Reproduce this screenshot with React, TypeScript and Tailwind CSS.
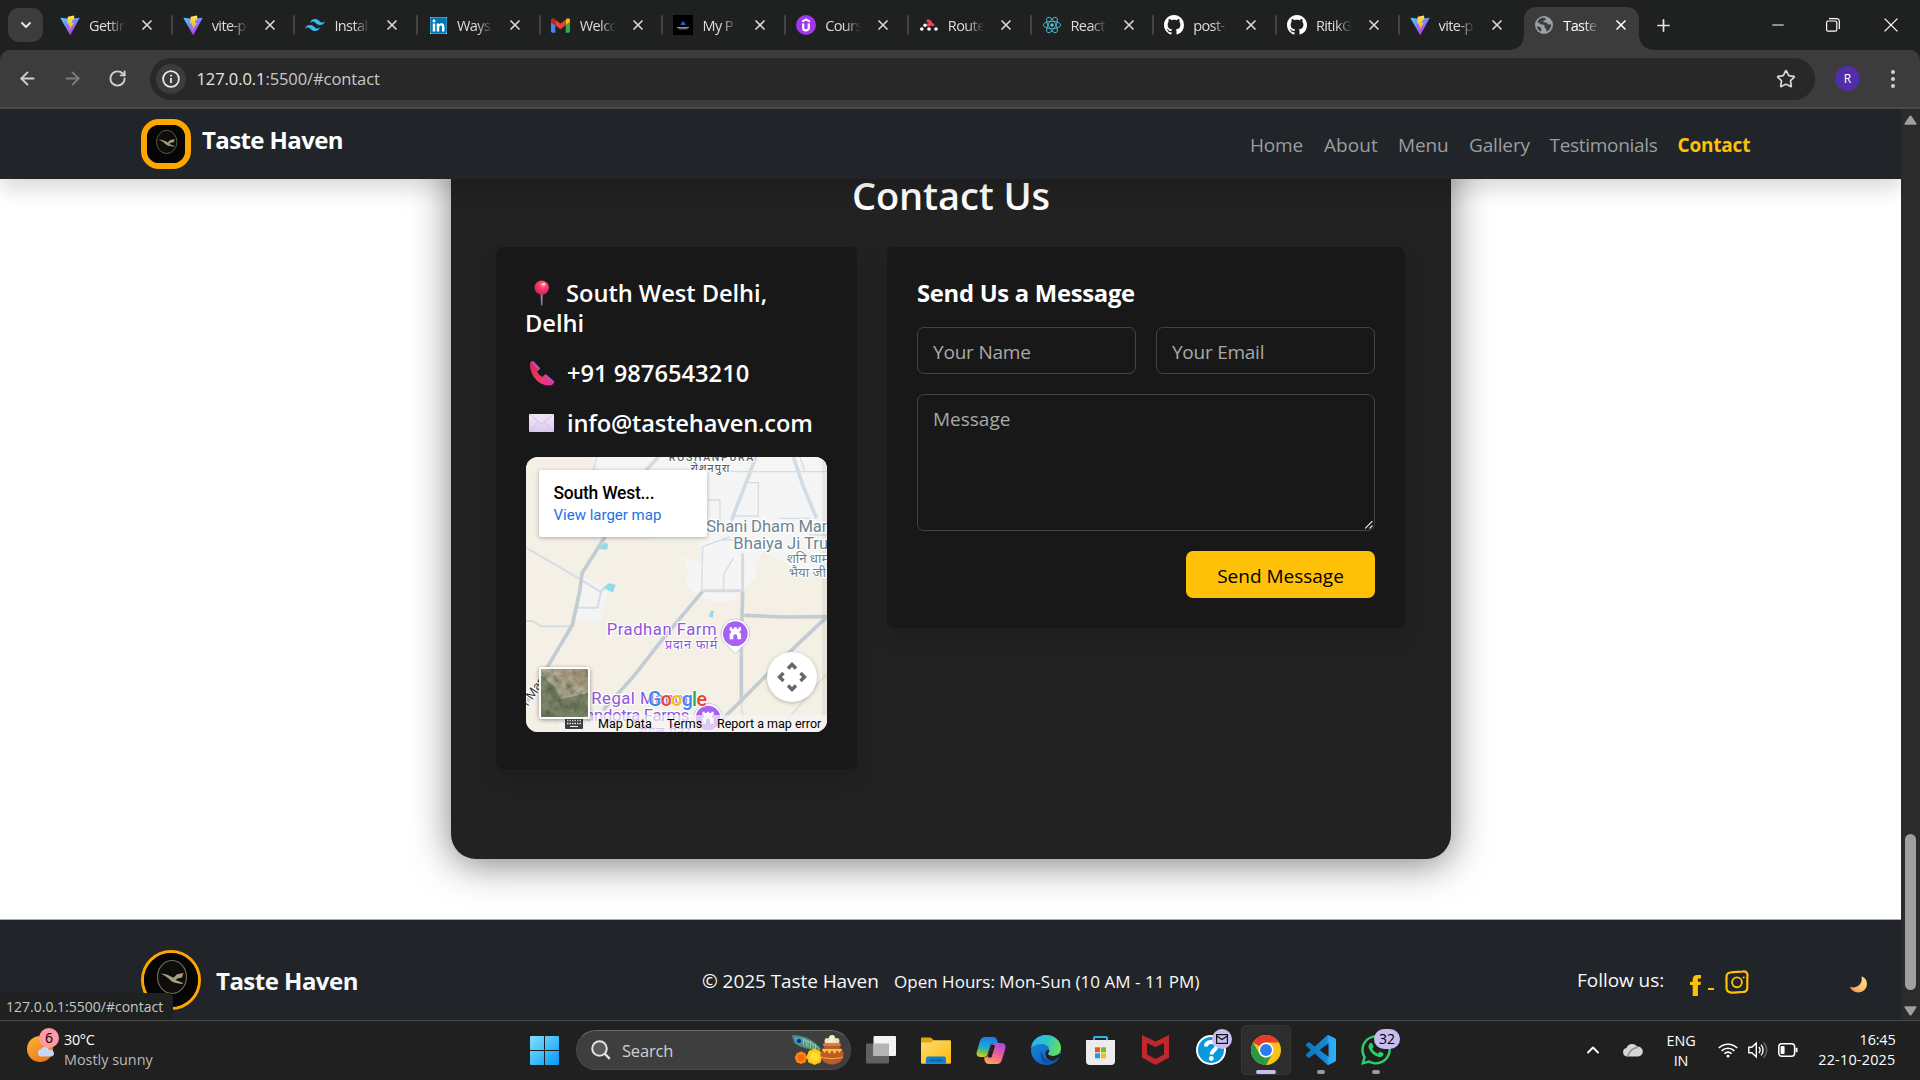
import type { ReactNode } from "react";
import { ArrowLeft, ArrowRight, ChevronDown, ChevronUp, Minus, Plus, RotateCw, Star, X } from "lucide-react";
import { FaLinkedin, FaWhatsapp } from "react-icons/fa";

/* ---------- favicons ---------- */

function ViteIcon() {
  return (
    <svg width="20" height="20" viewBox="0 0 32 32">
      <defs>
        <linearGradient id="vite-a" x1="0" y1="0" x2="0.6" y2="1">
          <stop offset="0" stopColor="#41d1ff" />
          <stop offset="1" stopColor="#bd34fe" />
        </linearGradient>
        <linearGradient id="vite-b" x1="0" y1="0" x2="0" y2="1">
          <stop offset="0" stopColor="#ffea83" />
          <stop offset="0.2" stopColor="#ffdd35" />
          <stop offset="1" stopColor="#ffa800" />
        </linearGradient>
      </defs>
      <path d="M31 5.5 17 31q-.7 1-1.4 0L1 5.500q-.5-1.300.8-1.200L16 6.500 30.200 4.300Q31.500 4.200 31 5.500Z" fill="url(#vite-a)" />
      <path d="M22.500.6 12.300 2.600l-.8 11.200 3.200-.6-.8 4.600 2.500-.6-1.300 7.600 7-12.600-3.500.6 1.500-5.300 3-.7Z" fill="url(#vite-b)" />
    </svg>
  );
}

function TailwindIcon() {
  return (
    <svg width="20" height="20" viewBox="2 2 20 20" fill="#38bdf8">
      <path d="M12 6c-2.67 0-4.33 1.33-5 4 1-1.33 2.17-1.83 3.5-1.5.76.19 1.31.74 1.91 1.35.98 1 2.12 2.15 4.59 2.15 2.67 0 4.33-1.33 5-4-1 1.33-2.17 1.83-3.5 1.5-.76-.19-1.3-.74-1.91-1.35C15.61 7.15 14.47 6 12 6zM7 12c-2.67 0-4.33 1.33-5 4 1-1.33 2.17-1.83 3.500-1.500.76.19 1.300.74 1.910 1.350.98 1 2.120 2.150 4.590 2.150 2.670 0 4.330-1.330 5-4-1 1.330-2.170 1.830-3.500 1.500-.76-.19-1.300-.74-1.910-1.350C10.610 13.150 9.470 12 7 12z" />
    </svg>
  );
}

function LinkedInIcon() {
  return (
    <div className="h-[17px] w-[17px] bg-white">
      <FaLinkedin className="-ml-px -mt-px h-[19px] w-[19px] text-[#0077b5]" />
    </div>
  );
}

function GmailIcon() {
  return (
    <svg width="19" height="15" viewBox="52 42 88 66">
      <path fill="#4285f4" d="M58 108h14V74L52 59v43c0 3.320 2.690 6 6 6" />
      <path fill="#34a853" d="M120 108h14c3.320 0 6-2.690 6-6V59l-20 15" />
      <path fill="#fbbc04" d="M120 48v26l20-15v-8c0-7.420-8.470-11.650-14.400-7.200" />
      <path fill="#ea4335" d="M72 74V48l24 18 24-18v26L96 92" />
      <path fill="#c5221f" d="M52 51v8l20 15V48l-5.600-4.200c-5.940-4.450-14.400-.22-14.400 7.200" />
    </svg>
  );
}

function PortfolioIcon() {
  return (
    <svg width="20" height="20" viewBox="0 0 20 20">
      <rect width="20" height="20" fill="#000" />
      <path d="M10 6c1.500 1.700 2.500 3 2.500 4H7.500c0-1 1-2.300 2.500-4Z" fill="#2f5be0" />
      <path d="M4 12.500h12M5.500 13.800h9" stroke="#b9b9c9" strokeWidth="0.8" />
    </svg>
  );
}

function UdemyIcon() {
  return (
    <svg width="20" height="20" viewBox="0 0 20 20">
      <circle cx="10" cy="10" r="10" fill="#a435f0" />
      <path d="M6.200 6.600 10 4.400l3.800 2.200" fill="none" stroke="#fff" strokeWidth="1.800" />
      <path d="M7.200 8.500v4.200c0 3.600 5.600 3.600 5.600 0V8.500" fill="none" stroke="#fff" strokeWidth="2.300" />
    </svg>
  );
}

function RouterIcon() {
  return (
    <svg width="20" height="20" viewBox="0 0 20 20">
      <path d="M8.800 6c4 0 3 4 0.200 4M9.500 6c2.500.3 2 3.800 4.500 3.800" fill="none" stroke="#f44250" strokeWidth="2.800" strokeLinecap="round" />
      <circle cx="6" cy="10.200" r="1.700" fill="#fff" />
      <circle cx="2.800" cy="14" r="1.800" fill="#fff" />
      <circle cx="10" cy="14" r="1.800" fill="#fff" />
      <circle cx="17" cy="14" r="1.800" fill="#fff" />
    </svg>
  );
}

function ReactIcon() {
  return (
    <svg width="20" height="20" viewBox="-11.500 -11.500 23 23" fill="none" stroke="#4fc1dc">
      <circle r="2" fill="#58c4dc" stroke="none" />
      <ellipse rx="10" ry="4.200" />
      <ellipse rx="10" ry="4.200" transform="rotate(60)" />
      <ellipse rx="10" ry="4.200" transform="rotate(120)" />
    </svg>
  );
}

function GithubIcon() {
  return (
    <svg width="20" height="20" viewBox="0 0 16 16" fill="#fff">
      <path d="M8 0C3.58 0 0 3.58 0 8c0 3.54 2.29 6.53 5.47 7.59.4.07.55-.17.55-.38 0-.19-.01-.82-.01-1.49-2.01.37-2.53-.49-2.69-.94-.09-.23-.48-.94-.82-1.13-.28-.15-.68-.52-.01-.53.63-.01 1.08.58 1.23.82.72 1.21 1.87.87 2.33.66.07-.52.28-.87.51-1.07-1.78-.2-3.64-.89-3.64-3.95 0-.87.31-1.59.82-2.15-.08-.2-.36-1.02.08-2.12 0 0 .67-.21 2.2.82.64-.18 1.32-.27 2-.27.68 0 1.36.09 2 .27 1.53-1.04 2.2-.82 2.2-.82.44 1.1.16 1.92.08 2.12.51.56.82 1.27.82 2.15 0 3.07-1.87 3.75-3.65 3.95.29.25.54.73.54 1.48 0 1.07-.01 1.93-.01 2.2 0 .21.15.46.55.38A8.013 8.013 0 0016 8c0-4.42-3.58-8-8-8z" />
    </svg>
  );
}

function GlobeIcon() {
  return (
    <svg width="18" height="18" viewBox="0 0 18 18">
      <circle cx="9" cy="9" r="9" fill="#9aa0a6" />
      <path d="M8 1.800c1.500 0 3.300.5 2.600 1.900-.5 1-2 .6-2.400 1.700-.3 1 1.600.9 2.900 1.100 1.600.3 1.300 2 2.600 2.100.9.100 1.500-.5 2.300-.3.600 3-1.500 6-4.200 7.200-.9-.6-.2-1.600-.6-2.500-.4-.8-1.600-.6-1.700-1.700-.1-1 .6-1.500-.2-2.200C8.300 8.200 5.500 9 4.700 7.500 4.200 6.300 3 6.300 2.200 6.500 3.200 3.600 5.500 1.900 8 1.800Z" fill="#3c3c3c" />
      <path d="M2 10.300c1.500.4 3.800.7 4.200 2.100.3 1-.3 2.200-.2 3.200C3.700 14.700 2 12.700 2 10.300Z" fill="#3c3c3c" />
    </svg>
  );
}

const tabs: { icon: ReactNode; title: string }[] = [
  { icon: <ViteIcon />, title: "Getting" },
  { icon: <ViteIcon />, title: "vite-p" },
  { icon: <TailwindIcon />, title: "Instal" },
  { icon: <LinkedInIcon />, title: "Ways" },
  { icon: <GmailIcon />, title: "Welco" },
  { icon: <PortfolioIcon />, title: "My P" },
  { icon: <UdemyIcon />, title: "Cours" },
  { icon: <RouterIcon />, title: "Route" },
  { icon: <ReactIcon />, title: "React" },
  { icon: <GithubIcon />, title: "post-" },
  { icon: <GithubIcon />, title: "RitikG" },
  { icon: <ViteIcon />, title: "vite-p" },
];

function TabBody({ icon, title, active }: { icon: ReactNode; title: string; active?: boolean }) {
  return (
    <>
      <div className="flex h-5 w-5 shrink-0 items-center justify-center">{icon}</div>
      <div
        className={
          "ml-[9px] mt-[2px] w-[36px] overflow-hidden whitespace-nowrap text-[14.500px] leading-[22px] tracking-[-0.600px] [mask-image:linear-gradient(to_right,#000_55%,transparent)] " +
          (active ? "text-white" : "text-[#dcdcdc]")
        }
      >
        {title}
      </div>
      <X className={"ml-[14px] h-4 w-4 shrink-0 " + (active ? "text-white" : "text-[#dadada]")} strokeWidth={2.500} />
    </>
  );
}

function TabStrip() {
  return (
    <div className="flex h-[50px] items-center bg-[#1f2120]">
      <div className="ml-2 flex h-[34px] w-[35px] items-center justify-center rounded-[11px] bg-[#3c3c3c]">
        <ChevronDown className="h-4 w-4 text-[#e3e3e3]" strokeWidth={3} />
      </div>
      <div className="ml-[5px] flex">
        {tabs.map((t, i) => (
          <div key={i} className="relative flex h-[34px] w-[122.7px] items-center pl-3">
            <TabBody icon={t.icon} title={t.title} />
            {i < 11 && <div className="absolute -right-[2px] top-[7px] h-5 w-[2px] rounded bg-[#434443]" />}
          </div>
        ))}
      </div>
      <div className="relative ml-[4px] mt-[7px] flex h-[43px] w-[115px] items-center rounded-t-[12px] bg-[#3c3c3c] pb-[7px] pl-[10px]">
        <div className="absolute -left-[14px] bottom-0 h-[14px] w-[14px] bg-[radial-gradient(circle_at_0_0,transparent_13.500px,#3c3c3c_14px)]" />
        <div className="absolute -right-[14px] bottom-0 h-[14px] w-[14px] bg-[radial-gradient(circle_at_100%_0,transparent_13.500px,#3c3c3c_14px)]" />
        <TabBody icon={<GlobeIcon />} title="Taste" active />
      </div>
      <Plus className="ml-[15px] h-[19px] w-[19px] text-[#e3e3e3]" strokeWidth={2.200} />
      <Minus className="ml-[96px] h-[18px] w-[18px] text-white" strokeWidth={1.500} />
      <svg className="ml-[39px]" width="14" height="14" viewBox="0 0 14 14" fill="none" stroke="#fff" strokeWidth="1.200">
        <rect x="0.600" y="3" width="10.200" height="10.200" rx="1.500" />
        <path d="M3 .7h7.800a2.500 2.500 0 0 1 2.500 2.500V11" />
      </svg>
      <svg className="ml-[44px]" width="14" height="14" viewBox="0 0 14 14" stroke="#fff" strokeWidth="1.300">
        <path d="M.6.6l12.800 12.800M13.400.6.6 13.400" />
      </svg>
    </div>
  );
}

function Toolbar() {
  return (
    <div className="bg-[#1f2120]">
      <div className="flex h-[59px] items-center rounded-t-[10px] border-b-2 border-[#494949] bg-[#3c3c3c]">
        <ArrowLeft className="ml-[17px] h-[21px] w-[21px] text-[#d0d0d0]" strokeWidth={2.100} />
        <ArrowRight className="ml-[24px] h-[21px] w-[21px] text-[#7d7d7d]" strokeWidth={2.100} />
        <RotateCw className="ml-[25px] h-[19px] w-[19px] text-[#d0d0d0]" strokeWidth={2.400} />
        <div className="ml-[23px] flex h-[42px] w-[1665px] items-center rounded-full bg-[#282828] pl-[6px] pr-[19px]">
          <div className="flex h-[30px] w-[30px] items-center justify-center rounded-full bg-[#3c3c3c]">
            <svg width="18" height="18" viewBox="0 0 18 18" fill="none" stroke="#e8e8e8" strokeWidth="1.800">
              <circle cx="9" cy="9" r="7.900" />
              <path d="M9 8v5M9 4.700v1.900" />
            </svg>
          </div>
          <div className="ml-[10.500px] mt-px text-[16.500px] leading-6 tracking-[-0.080px] text-[#e6e6e6]">
            127.0.0.1<span className="text-[#c7c7c7]">:5500/#contact</span>
          </div>
          <Star className="ml-auto h-[20px] w-[20px] text-[#d6d6d6]" strokeWidth={2.100} />
        </div>
        <div className="ml-[20px] flex h-[25px] w-[25px] items-center justify-center rounded-full bg-[#512da8] text-[12px] text-white">R</div>
        <div className="ml-[31px] flex flex-col gap-[3px]">
          <div className="h-1 w-1 rounded-full bg-[#d0d0d0]" />
          <div className="h-1 w-1 rounded-full bg-[#d0d0d0]" />
          <div className="h-1 w-1 rounded-full bg-[#d0d0d0]" />
        </div>
      </div>
    </div>
  );
}

/* ---------- site ---------- */

function CraneLogo({ className }: { className: string }) {
  return (
    <svg className={className} viewBox="0 0 54 54">
      <rect width="54" height="54" fill="#050505" />
      <ellipse cx="28" cy="24" rx="14.500" ry="16.500" fill="#0d0d0b" stroke="#6d6653" strokeWidth="1.200" />
      <path d="M16.500 20.500c5 .4 9 1.800 13 4.300l3.500-3.600 6.500-1.100-1.500 4.500-4.500.8-2 1.500 7.500 3-.5 1c-5-.5-8.500-1-11-2.700-2.500-2.500-6-5.700-11-7.700Z" fill="#a89f83" />
    </svg>
  );
}

const navLinks = [
  { label: "Home", cls: "w-[54px] tracking-[-0.200px]" },
  { label: "About", cls: "w-[54px] tracking-[0.100px]" },
  { label: "Menu", cls: "w-[51px] tracking-[-0.150px]" },
  { label: "Gallery", cls: "w-[60.500px] tracking-[-0.150px]" },
  { label: "Testimonials", cls: "w-[108px] tracking-[-0.300px]" },
];

function Navbar() {
  return (
    <div className="relative z-10 flex h-[70px] items-start bg-[#212529] pl-[141px] shadow-[0_10px_20px_rgba(0,0,0,0.150)]">
      <div className="mt-[10px] h-[50px] w-[50px] overflow-hidden rounded-[18px] border-[6px] border-[#ffa500]">
        <CraneLogo className="h-full w-full" />
      </div>
      <div className="ml-[11px] mt-[16px] w-[151px] text-[24px] font-bold leading-[30px] tracking-[-0.600px] text-white">Taste Haven</div>
      <div className="ml-[897px] mt-[21px] flex gap-5 whitespace-nowrap text-[19px] leading-[30px] text-[#9b9d9f]">
        {navLinks.map((l) => (
          <div key={l.label} className={l.cls}>{l.label}</div>
        ))}
        <div className="font-bold tracking-[-0.200px] text-[#ffc107]">Contact</div>
      </div>
    </div>
  );
}

function PinIcon() {
  return (
    <svg width="30" height="26" viewBox="0 0 30 26">
      <defs>
        <radialGradient id="pin" cx="0.600" cy="0.300" r="0.700">
          <stop offset="0" stopColor="#ff7d94" />
          <stop offset="0.450" stopColor="#fb3a68" />
          <stop offset="1" stopColor="#d51f5c" />
        </radialGradient>
      </defs>
      <path d="M15.500 14h2.400l-.5 11.500h-1.400Z" fill="#8d7f97" />
      <circle cx="16.700" cy="7.600" r="7.200" fill="url(#pin)" />
      <ellipse cx="18.600" cy="4.200" rx="1.700" ry="1.300" fill="#ffd3da" />
    </svg>
  );
}

function PhoneIcon() {
  return (
    <svg width="30" height="26" viewBox="0 0 30 26">
      <defs>
        <linearGradient id="phone" x1="0" y1="0" x2="1" y2="1">
          <stop offset="0" stopColor="#d12a4c" />
          <stop offset="0.600" stopColor="#f0386b" />
          <stop offset="1" stopColor="#e32bb0" />
        </linearGradient>
      </defs>
      <path d="M5 3.500C5 1.500 7 .3 8.300 1.200l6.300 6.600c.7 1-.2 1.800-1 2.400l-1.400 1.200c1 2.400 2.800 4.300 5.300 5.600l1.400-1.600c.7-.9 1.800-1.300 2.700-.5l7.300 6.300c1 1-.4 3-2 3.700C16 28 4.500 17 5 3.500Z" fill="url(#phone)" />
      <path d="M8.300 1.200l6.300 6.600c.7 1-.2 1.800-1 2.400L6.800 2.500c.2-1 .9-1.500 1.500-1.300ZM21.600 14.900l7.300 6.300-1.900 1.600-7.400-7c.6-.9 1.300-1.300 2-.9Z" fill="#b153c4" />
    </svg>
  );
}

function MailIcon() {
  return (
    <svg width="30" height="26" viewBox="0 0 30 26">
      <defs>
        <linearGradient id="mail" x1="0" y1="0" x2="0" y2="1">
          <stop offset="0" stopColor="#f4ecf8" />
          <stop offset="1" stopColor="#d9c6f0" />
        </linearGradient>
      </defs>
      <rect x="4" y="4" width="25" height="18" rx="1" fill="url(#mail)" />
      <path d="M4.500 21.500 13.500 12M28.500 21.500 19.500 12" stroke="#cdbbe6" strokeWidth="0.800" />
      <path d="M4.500 4.500 16.500 14 28.500 4.500" fill="#ece2f4" stroke="#cdbbe6" strokeWidth="0.900" />
    </svg>
  );
}

function MapMarker({ x, y }: { x: number; y: number }) {
  return (
    <g transform={`translate(${x} ${y})`}>
      <path d="M0-44a44 44 0 0 1 30 75C18 42 12 46 6 55q-6 8-12 0C-12 46-18 42-30 31A44 44 0 0 1 0-44Z" fill="#fff" stroke="#b9b4c0" strokeWidth="2" />
      <circle r="37" fill="#a860f5" />
      <path d="M-17 17V-1h4V-9h-4v-10h7v4h6v-4h8v4h6v-4h7v10h-4v8h4v18H6V8a6 6 0 0 0-12 0v9Z" fill="#fff" />
    </g>
  );
}

function MapView() {
  return (
    <div className="relative mt-[19px] h-[275px] w-[301px] overflow-hidden rounded-[12px] bg-[#f5f0e5] font-['Roboto'] font-normal">
      <svg className="block h-[275px] w-[301px]" viewBox="78 51 903 825" fill="none" fontFamily="Roboto, 'Noto Sans', sans-serif">
        <rect x="78" y="51" width="903" height="825" fill="#f5f0e5" />
        <path d="M268 51H981V420L860 370 790 330 765 380 768 410 730 450 700 480 660 487 610 475 560 440 563 400 552 350 600 370 615 345 592 300 450 300 330 120Z" fill="#f5f5f5" />
        <path d="M245 405 325 450 300 550 220 535Z" fill="#f4f4f4" />
        <g stroke="#d3dde3" strokeWidth="6">
          <path d="M78 323 245 420 300 455 315 440M228 503h64l12-50 20-15M78 543h20l25 16h92" />
          <path d="M290 51 280 90 420 110M540 51 610 90 720 95H981M625 180h35v80M740 128h35v100h-80v50M840 235h90v50h50M605 450 608 320 690 290M700 355 672 400 670 450M665 300h85M900 51 915 95" strokeWidth="4" />
          <path d="M981 700 870 830 840 876M722 780 735 876" strokeWidth="4" />
        </g>
        <g stroke="#d2dce2" strokeWidth="11">
          <path d="M475 51 410 120M768 51 695 240M880 51 910 140 950 235" />
          <path d="M605 452H728M728 340V460" strokeWidth="9" />
        </g>
        <g stroke="#c2ccd2" strokeWidth="11">
          <path d="M315 290 246 400 240 450 217 555 140 685 78 790M607 455 490 595 400 710 310 810M728 455 724 610 724 790M733 526 850 531 981 530M981 530 870 635 730 775 670 835" />
        </g>
        <path d="M294 327 315 307 325 312 321 329ZM312 443 326 430 347 434 339 457 326 452ZM627 530 631 514 642 513 638 533Z" fill="#8edcec" />
        <rect x="966" y="51" width="15" height="825" fill="#000" opacity="0.050" />
        <g fontSize="50" stroke="#fff" strokeWidth="7" strokeLinejoin="round" paintOrder="stroke">
          <g fill="#5f6368" fontSize="32" fontWeight="500">
            <text x="506" y="64" textLength="254">ROSHANPURA</text>
            <text x="572" y="97" textLength="116">रोशनपुरा</text>
          </g>
          <g fill="#6d858f">
            <text x="619" y="275" textLength="430">Shani Dham Mandir</text>
            <text x="700" y="327">Bhaiya Ji Trust</text>
            <text x="860" y="370" fontSize="40">शनि धाम मंदिर</text>
            <text x="866" y="410" fontSize="40">भैया जी ट्रस्ट</text>
          </g>
          <g fill="#8f55dd">
            <text x="320" y="586" textLength="330">Pradhan Farm</text>
            <text x="495" y="628" fontSize="38" textLength="157">प्रदान फार्म</text>
            <text x="274" y="791" textLength="296">Regal Manor</text>
            <text x="256" y="843" textLength="312">andotra Farms</text>
            <text x="416" y="888" fontSize="38" textLength="155">रीगल मैनर</text>
          </g>
          <text x="84" y="800" fontSize="38" fill="#3c4043" transform="rotate(-56 84 800)">r Marg</text>
        </g>
        <MapMarker x={706} y={581} />
        <MapMarker x={624} y={834} />
      </svg>

      <div className="absolute left-[13px] top-[13px] h-[67px] w-[168px] rounded-[2px] bg-white pl-[14.500px] pt-[12px] shadow-[0_1px_4px_rgba(0,0,0,0.300)]">
        <div className="text-[17.500px] font-medium leading-[22px] tracking-[-0.250px] text-black">South West...</div>
        <div className="text-[15px] leading-[22px] text-[#1a73e8]">View larger map</div>
      </div>

      <div className="absolute left-[241px] top-[195px] flex h-[50px] w-[50px] items-center justify-center rounded-full bg-white shadow-[0_1px_4px_rgba(0,0,0,0.250)]">
        <svg width="30" height="30" viewBox="-15 -15 30 30" fill="none" stroke="#666" strokeWidth="3.400">
          <path d="M-4-8.500 0-12.500 4-8.500M-4 8.500 0 12.500 4 8.500M-8.500-4-12.500 0-8.500 4M8.500-4 12.500 0 8.500 4" />
        </svg>
      </div>

      <div className="absolute bottom-0 right-0 h-[17px] w-[268px] bg-[#f5f5f5]/70 text-black">
        <div className="flex h-[17px] items-center whitespace-nowrap pl-[6px] text-[12.500px] leading-[17px]">
          <svg width="18" height="11" viewBox="0 0 18 11">
            <rect width="18" height="11" rx="1" fill="#3c4043" />
            <path d="M2 2.500h14M2 5.500h14" stroke="#eee" strokeWidth="1.300" strokeDasharray="1.500 1" />
            <path d="M5 8.500h8" stroke="#eee" strokeWidth="1.200" />
          </svg>
          <span className="ml-[15px] w-[69px]">Map Data</span>
          <span className="w-[50px]">Terms</span>
          <span>Report a map error</span>
        </div>
      </div>

      <div className="absolute left-[13px] top-[210px] h-[52px] w-[51px] rounded-[3px] border-2 border-white shadow-[0_1px_4px_rgba(0,0,0,0.400)]">
        <svg className="h-full w-full" viewBox="0 0 47 48">
          <filter id="terrain" x="0" y="0" width="1" height="1">
            <feTurbulence type="fractalNoise" baseFrequency="0.120" numOctaves="4" seed="7" />
            <feColorMatrix values="1 0 0 0 -0.080  0.900 0 0 0 -0.050  0.800 0 0 0 -0.100  0 0 0 0 1" />
          </filter>
          <rect width="47" height="48" fill="#6f6b55" />
          <rect width="47" height="48" filter="url(#terrain)" opacity="0.700" />
          <path d="M0 6 14 18 20 30 47 24V48H0Z" fill="#34502f" opacity="0.420" />
          <path d="M14 0H47V20L28 16Z" fill="#a58d74" opacity="0.400" />
        </svg>
      </div>

      <div className="absolute left-[122px] top-[231px] flex text-[19.500px] font-medium leading-[24px] tracking-[-0.600px] [text-shadow:0_0_2px_#fff,0_0_2px_#fff]">
        <span className="text-[#4285f4]">G</span>
        <span className="text-[#ea4335]">o</span>
        <span className="text-[#fbbc04]">o</span>
        <span className="text-[#4285f4]">g</span>
        <span className="text-[#34a853]">l</span>
        <span className="text-[#ea4335]">e</span>
      </div>
    </div>
  );
}

function ContactSection() {
  return (
    <div className="-mt-10 ml-[451px] h-[720px] w-[1000px] rounded-b-[25px] bg-[#222] px-[45px] pt-[32px] shadow-[0_5px_38px_rgba(0,0,0,0.500)]">
      <div className="text-center text-[38px] font-semibold leading-[48px] tracking-[-0.100px] text-white">Contact Us</div>
      <div className="mt-[28px] flex items-start gap-[30px]">
        <div className="h-[522px] w-[361px] rounded-[7px] bg-[#181818] px-[30px] pt-[31px] text-[23.700px] font-semibold leading-[30px] text-white shadow-[0_10px_20px_rgba(0,0,0,0.150)]">
          <div className="-ml-px tracking-[-0.050px]">
            <span className="mr-[11px] inline-block h-[26px] w-[30px] align-[-4px]"><PinIcon /></span>
            South West Delhi, Delhi
          </div>
          <div className="-ml-px mt-5 flex items-center">
            <PhoneIcon />
            <span className="ml-[12px]">+91 9876543210</span>
          </div>
          <div className="-ml-px mt-5 flex items-center">
            <MailIcon />
            <span className="ml-[12px] whitespace-nowrap tracking-[-0.180px]">info@tastehaven.com</span>
          </div>
          <MapView />
        </div>
        <div className="w-[518px] rounded-[7px] bg-[#181818] px-[30px] pb-[30px] pt-[31px] shadow-[0_10px_20px_rgba(0,0,0,0.150)]">
          <div className="text-[23.800px] font-bold leading-[30px] tracking-[-0.280px] text-white">Send Us a Message</div>
          <div className="mt-[19px] flex gap-5">
            <input className="h-[47px] w-[219px] rounded-[7px] border border-[#444] bg-transparent px-[15px] pt-[3px] text-[19px] tracking-[-0.200px] text-white placeholder-[#a9a9a9]" placeholder="Your Name" />
            <input className="h-[47px] w-[219px] rounded-[7px] border border-[#444] bg-transparent px-[15px] pt-[3px] text-[19px] tracking-[-0.250px] text-white placeholder-[#a9a9a9]" placeholder="Your Email" />
          </div>
          <div className="relative mt-5 h-[137px]">
            <textarea className="block h-[137px] w-full resize-none rounded-[7px] border border-[#444] bg-transparent px-[15px] py-[8.500px] text-[19px] leading-[30px] text-white placeholder-[#a9a9a9]" placeholder="Message" />
            <svg className="absolute bottom-[2px] right-[2px]" width="8" height="8" viewBox="0 0 8 8" stroke="#ddd" strokeWidth="1.200">
              <path d="M0 7.500 7.500 0M4.500 7.500l3-3" />
            </svg>
          </div>
          <div className="mt-5 flex justify-end">
            <div className="h-[47px] w-[189px] rounded-[7px] bg-[#ffc107] text-center text-[19px] leading-[50px] text-black">Send Message</div>
          </div>
        </div>
      </div>
    </div>
  );
}

function Footer() {
  return (
    <div className="relative mt-[60px] flex h-[101px] items-start whitespace-nowrap border-t border-[#9fb1b4] bg-[#212529] pl-[141px] text-[#f8f9fa]">
      <div className="mt-[30px] h-[60px] w-[60px] overflow-hidden rounded-full border-[3px] border-[#ffa500]">
        <CraneLogo className="h-full w-full" />
      </div>
      <div className="ml-[15px] mt-[46px] w-[150px] text-[24px] font-bold leading-[30px] tracking-[-0.520px]">Taste Haven</div>
      <div className="ml-[336px] mt-[46px] w-[192px] text-[19px] leading-[30px] tracking-[-0.070px]">© 2025 Taste Haven</div>
      <div className="mt-[47px] w-[305px] text-[17px] leading-[30px] tracking-[0.020px]">Open Hours: Mon-Sun (10 AM - 11 PM)</div>
      <div className="ml-[378px] mt-[45px] w-[113px] text-[19px] leading-[30px] tracking-[-0.050px]">Follow us:</div>
      <svg className="mt-[55px]" width="11" height="21" viewBox="0 0 11 21" fill="#ffc107">
        <path d="M2.700 21V10H0V6.800h2.700V4.500C2.700 1.500 4.500 0 7.300 0H11v3.600H9C8.200 3.600 7.900 4 7.900 5v1.800h3L10.400 10H7.900v11Z" />
      </svg>
      <div className="ml-[7px] mt-[68px] h-[2px] w-[6px] bg-[#ffc107]" />
      <svg className="ml-[11px] mt-[50px]" width="24" height="24" viewBox="0 0 24 24" fill="none" stroke="#ffc107">
        <path d="M5 2.500C9 1.600 14 2 17.500 1.500 21 .8 23 3 22.400 6.500c-.3 4 .1 8-.2 12-.5 2.800-2.400 3.600-5 3.500-4-.1-7.500 1-11 .6-3.500-.2-4.700-2-4.700-5C1.800 14 1.300 10 1.500 7 1.500 4.500 2.500 3 5 2.500Z" strokeWidth="2.200" />
        <circle cx="12" cy="12.300" r="4.900" strokeWidth="1.900" />
        <circle cx="18.700" cy="7.500" r="1" fill="#ffc107" stroke="none" />
      </svg>
      <svg className="absolute left-[1850px] top-[56px]" width="17" height="17" viewBox="0 0 17 17">
        <defs>
          <linearGradient id="moon" x1="0.900" y1="0" x2="0.200" y2="1">
            <stop offset="0" stopColor="#ffe08a" />
            <stop offset="0.600" stopColor="#ffc36b" />
            <stop offset="1" stopColor="#ff8a5c" />
          </linearGradient>
        </defs>
        <path d="M11.500.2C15 1.500 17 4.500 17 8a8.400 8.400 0 0 1-8.500 8.400C4.500 16.500 1 14 0 10.800 5 13 13.500 9 11.500.2Z" fill="url(#moon)" />
      </svg>
    </div>
  );
}

function Scrollbar() {
  return (
    <div className="flex w-[19px] flex-col items-center bg-[#2b2b2b] pt-[6px]">
      <svg width="13" height="10" viewBox="0 0 13 10" fill="#9f9f9f"><path d="M6.500.5q.6 0 1 .6l5 7.500q.3 1.200-.8 1.200H1.300Q.2 9.800.5 8.600l5-7.500q.4-.6 1-.6Z" /></svg>
      <div className="mt-[709px] h-[156px] w-[11px] rounded-full bg-[#9f9f9f]" />
      <svg className="mt-[16px]" width="13" height="10" viewBox="0 0 13 10" fill="#9f9f9f"><path d="M6.500 9.500q-.6 0-1-.6l-5-7.500Q.2.200 1.300.200h10.400q1.100 0 .8 1.200l-5 7.500q-.4.600-1 .6Z" /></svg>
    </div>
  );
}

/* ---------- taskbar ---------- */

function WeatherIcon() {
  return (
    <div className="relative h-[34px] w-[32px]">
      <svg className="absolute left-0 top-[8px]" width="29" height="26" viewBox="0 0 29 26">
        <defs>
          <linearGradient id="sun" x1="0" y1="0" x2="0.700" y2="1">
            <stop offset="0" stopColor="#f8b93a" />
            <stop offset="1" stopColor="#ee7417" />
          </linearGradient>
        </defs>
        <circle cx="13" cy="13" r="13" fill="url(#sun)" />
        <path d="M14 20.500a3.600 3.600 0 0 1-.5-7 5 5 0 0 1 9 .5 3.300 3.300 0 1 1 2 6.500Z" fill="#c6d8f8" />
      </svg>
      <div className="absolute right-0 top-0 h-5 w-5 rounded-full bg-[#ff99a4] text-center text-[14px] leading-5 text-black">6</div>
    </div>
  );
}

function WindowsIcon() {
  return (
    <svg width="29" height="29" viewBox="0 0 29 29">
      <defs>
        <linearGradient id="win" x1="0" y1="0" x2="29" y2="29" gradientUnits="userSpaceOnUse">
          <stop offset="0" stopColor="#86dcfd" />
          <stop offset="0.500" stopColor="#41c0fa" />
          <stop offset="1" stopColor="#0a93f5" />
        </linearGradient>
      </defs>
      <path d="M1 0h13v14H0V1q0-1 1-1ZM15 0h13q1 0 1 1v13H15ZM0 15h14v14H1q-1 0-1-1ZM15 15h14v13q0 1-1 1H15Z" fill="url(#win)" />
    </svg>
  );
}

function FestivalArt() {
  const petals = [0, 45, 90, 135, 180, 225, 270, 315];
  return (
    <svg width="53" height="30" viewBox="0 0 53 30">
      <path d="M0 .5C8-1 22 4 29 14l-1 1C20 16 6 12 2 7.500Z" fill="#4d8a7c" />
      <path d="M3 3C12 4 21 8 28 14.500M8 2.500l2 6M11 2.700l1 8M13.500 3.500l1 8M16 5v7.500M18.500 6v7.500M21 7.500v6.500M23.500 9v5" stroke="#a8d7b0" strokeWidth="0.800" fill="none" />
      <ellipse cx="7" cy="6" rx="4" ry="3.300" fill="#2e9fc4" />
      <circle cx="7" cy="6" r="2.100" fill="#17236e" />
      {petals.map((a) => (
        <circle key={a} cx="9" cy="19" r="2.400" fill="#ff8410" transform={`rotate(${a} 9 22.800)`} />
      ))}
      <circle cx="9" cy="22.800" r="3.500" fill="#f26a05" />
      {petals.map((a) => (
        <circle key={a} cx="22.500" cy="16.800" r="3" fill="#fdc913" transform={`rotate(${a} 22.500 21.800)`} />
      ))}
      <circle cx="22.500" cy="21.800" r="4.500" fill="#ffdc33" />
      <circle cx="35.500" cy="6" r="3" fill="#f0dfb8" />
      <circle cx="40" cy="3" r="3" fill="#fbf1d6" />
      <circle cx="44.500" cy="6" r="3" fill="#eddcb4" />
      <circle cx="40" cy="6" r="3.200" fill="#f8ebca" />
      <rect x="31" y="8" width="18" height="3.500" rx="1.700" fill="#df7a43" />
      <path d="M33 11.500h14c3 2 5 5 4.500 9-.5 5-5 9-11.500 9s-11-4-11.500-9c-.4-4 1.500-7 4.500-9Z" fill="#bd5a28" />
      <path d="M30 14h20l-2.500 4-2.500-3-2.500 4-2.500-4-2.500 4-2.500-4-2.500 3Z" fill="#fbc53d" />
      <path d="M29 22c6 2 16 2 22 0" stroke="#f6b04d" strokeWidth="1" fill="none" />
    </svg>
  );
}

function TaskViewIcon() {
  return (
    <svg width="30" height="28" viewBox="0 0 30 28">
      <rect x="0" y="7.500" width="23" height="20" rx="1" fill="#606060" />
      <rect x="7.500" y="0" width="22.500" height="20" rx="1" fill="#f4f4f5" />
      <rect x="7.500" y="7.500" width="15.500" height="12.500" fill="#b4b4b4" />
    </svg>
  );
}

function FolderIcon() {
  return (
    <svg width="30" height="27" viewBox="0 0 30 27">
      <defs>
        <linearGradient id="folder" x1="0" y1="0" x2="1" y2="1">
          <stop offset="0" stopColor="#ffdc6e" />
          <stop offset="1" stopColor="#fcb912" />
        </linearGradient>
      </defs>
      <path d="M0 1.500Q0 .5 1 .5h8q1 0 1.700.7L13 3.500V8H0Z" fill="#e5a50a" />
      <path d="M0 5.500h10l3-2.200h16q1 0 1 1V26q0 .8-1 .8H1q-1 0-1-.8Z" fill="url(#folder)" />
      <path d="M5 26.800V21.500q0-2 2-2h16q2 0 2 2v5.300Z" fill="#0f7fd0" />
      <path d="M8.500 23.300h13" stroke="#0a4f8c" strokeWidth="1" />
    </svg>
  );
}

function CopilotIcon() {
  return (
    <svg width="30" height="27" viewBox="0 0 30 27">
      <defs>
        <linearGradient id="cp-a" x1="0.300" y1="0" x2="0.100" y2="1">
          <stop offset="0" stopColor="#1a7fea" />
          <stop offset="0.450" stopColor="#1ba8d6" />
          <stop offset="0.700" stopColor="#5fbf5a" />
          <stop offset="1" stopColor="#f2cf17" />
        </linearGradient>
        <linearGradient id="cp-b" x1="0.800" y1="0" x2="0.300" y2="1">
          <stop offset="0" stopColor="#a14be8" />
          <stop offset="0.500" stopColor="#ee5c8f" />
          <stop offset="1" stopColor="#ffa25c" />
        </linearGradient>
      </defs>
      <path d="M17 0c2.300 0 3.500 1.200 4.200 3.300L22 6h-4c-2.500 0-3.400 1.500-4 3.500l-2.400 7.700C11 19 10 20 8 20H4.500C1.500 20 0 18 .8 14.800L4 4C4.900 1.200 6.500 0 9 0Z" fill="url(#cp-a)" />
      <path d="M13 27c-2.600 0-3.700-1.200-4.400-3.500L8 20.500c2.300 0 3.600-1 4.200-3l2.400-8C15.200 7.200 16.300 6 18.500 6h6.800c3.500 0 5 2.300 4 5.700l-3.200 10.500C25 25.600 23.500 27 21 27Z" fill="url(#cp-b)" />
      <path d="M14.500 9.500 12 18c-.5 1.500-.2 2.600 1.300 2.600h2.200l3-9.800c.6-2 .3-3-1-3-1.600 0-2.500.3-3 1.700Z" fill="#241f26" />
    </svg>
  );
}

function EdgeIcon() {
  return (
    <svg width="30" height="30" viewBox="0 0 30 30">
      <defs>
        <linearGradient id="edge-a" x1="0" y1="0.300" x2="1" y2="0.600">
          <stop offset="0" stopColor="#2bb3ee" />
          <stop offset="0.500" stopColor="#2fc6c6" />
          <stop offset="1" stopColor="#6be04f" />
        </linearGradient>
        <linearGradient id="edge-b" x1="0" y1="0" x2="0.500" y2="1">
          <stop offset="0" stopColor="#1b8fd9" />
          <stop offset="1" stopColor="#0a63c4" />
        </linearGradient>
      </defs>
      <circle cx="15" cy="15" r="15" fill="url(#edge-b)" />
      <path d="M11 16c0 8 7 12 12 10.500l5-3.500C25 28 20 30 15 30 11 28 8 21 11 16Z" fill="#0d4a9c" />
      <path d="M0 13C1 5 7.500 0 15 0c9 0 15 6 15 13 0 5-3.500 8-8 8-3.500 0-5-1.300-5-2.300 0-.8 1.300-1.400 1.300-3.700 0-3.500-3.500-6-8-6S2 11 0 13Z" fill="url(#edge-a)" />
      <path d="M18.300 15c0 2.300-1.300 2.900-1.300 3.700 0 1 1.500 2.300 5 2.300 3 0 5-1 6.500-2.700L31 24l-4 1c-8 3-13-2-12.500-7 0-2 1.800-3.500 3.800-3Z" fill="#212121" />
      <path d="M28.500 22.500C25 28 20 30 15 30c-3-1.500-4-3.500-4.300-5.500C16 29 24 26.500 27.500 22.300Z" fill="#1158ae" />
    </svg>
  );
}

function StoreIcon() {
  return (
    <svg className="-ml-[2px]" width="29" height="29" viewBox="0 0 29 29">
      <path d="M8 5.500V1.800Q8 1 9 1h11q1 0 1 .8v3.700" fill="none" stroke="#28b4f0" strokeWidth="2" />
      <path d="M0 4h29v21q0 4-4 4H4q-4 0-4-4Z" fill="#ececec" />
      <path d="M9 11.300h5v5H9Z" fill="#f1511b" />
      <path d="M15 11.300h5v5h-5Z" fill="#80b91b" />
      <path d="M9 17.300h5v5H9Z" fill="#12a3ec" />
      <path d="M15 17.300h5v5h-5Z" fill="#fbbb0e" />
    </svg>
  );
}

function McAfeeIcon() {
  return (
    <svg className="-ml-[2px]" width="27" height="30" viewBox="0 0 27 30">
      <path d="M0 0 13.500 6.500 27 0V22.500L13.500 30 0 22.500Z" fill="#c1282d" />
      <path d="M5 8 13.500 12 22 8v11.500L13.500 24 5 19.500Z" fill="#212121" />
    </svg>
  );
}

function HelpIcon() {
  return (
    <div className="relative h-[30px] w-[30px]">
      <svg width="30" height="30" viewBox="0 0 30 30">
        <circle cx="15" cy="15" r="14" fill="#0a98dc" stroke="#fff" strokeWidth="2" />
        <path d="M10 11.500C10 8 12.500 7 15 7s5.500 1.300 5.500 4.300c0 3.700-5 4-5 8.200" fill="none" stroke="#fff" strokeWidth="4" />
        <circle cx="15.300" cy="23.500" r="2.400" fill="#fff" />
      </svg>
      <div className="absolute -right-[6px] -top-[6px] flex h-5 w-5 items-center justify-center rounded-full bg-[#c8bdf0]">
        <svg width="12" height="10" viewBox="0 0 12 10" fill="none" stroke="#111" strokeWidth="1.200"><rect x=".6" y=".6" width="10.800" height="8.800" /><path d="M.6 2 6 5.500 11.400 2" /></svg>
      </div>
    </div>
  );
}

function ChromeIcon() {
  return (
    <svg width="30" height="30" viewBox="0 0 48 48">
      <circle cx="24" cy="24" r="24" fill="#fbc116" />
      <path d="M24 0a24 24 0 0 1 20.800 12H24a12 12 0 0 0-10.400 6L3.200 12A24 24 0 0 1 24 0Z" fill="#e33b2e" />
      <path d="M3.200 12 13.600 30A12 12 0 0 0 24 36l-3.500 11.700A24 24 0 0 1 3.200 12Z" fill="#269a43" />
      <path d="M24 36a12 12 0 0 0 10.400-6L24 48a24 24 0 0 1-4-.3Z" fill="#269a43" />
      <circle cx="24" cy="24" r="12" fill="#fff" />
      <circle cx="24" cy="24" r="9.500" fill="#2a7df0" />
    </svg>
  );
}

function VSCodeIcon() {
  return (
    <svg width="30" height="30" viewBox="0 0 24 24">
      <defs>
        <linearGradient id="vsc" x1="0" y1="0" x2="1" y2="0">
          <stop offset="0" stopColor="#0d78bd" />
          <stop offset="0.700" stopColor="#1489d8" />
          <stop offset="0.760" stopColor="#2ba6f2" />
          <stop offset="1" stopColor="#2fb0f8" />
        </linearGradient>
      </defs>
      <path fill="url(#vsc)" d="M23.150 2.587L18.210.21a1.494 1.494 0 0 0-1.705.29l-9.460 8.630-4.120-3.128a.999.999 0 0 0-1.276.057L.327 7.261A1 1 0 0 0 .326 8.740L3.899 12 .326 15.260a1 1 0 0 0 .001 1.479L1.650 17.940a.999.999 0 0 0 1.276.057l4.120-3.128 9.460 8.630a1.492 1.492 0 0 0 1.704.29l4.942-2.377A1.500 1.500 0 0 0 24 20.060V3.939a1.500 1.500 0 0 0-.85-1.352zm-5.146 14.861L10.826 12l7.178-5.448v10.896z" />
    </svg>
  );
}

function TaskItem({ children }: { children: ReactNode }) {
  return <div className="flex h-[50px] w-[55px] items-center justify-center">{children}</div>;
}

function Taskbar() {
  return (
    <div className="flex h-[60px] border-t border-[#4a4a4a] bg-[#202020] text-white">
      <div className="ml-[27px] mt-[7px]"><WeatherIcon /></div>
      <div className="ml-[5px] mt-[9px] w-[111px] text-[14.400px] leading-5">
        <div className="tracking-[-0.300px]">30°C</div>
        <div className="text-[#b9b9b9]">Mostly sunny</div>
      </div>
      <div className="ml-[355px] mt-[15px]"><WindowsIcon /></div>
      <div className="ml-[17px] mt-[9px] flex h-10 w-[275px] items-center rounded-full border border-[#4b4b4b] border-t-[#6a6a6a] bg-[#3e3e3e] pl-[14px]">
        <svg width="20" height="20" viewBox="0 0 20 20" fill="none" stroke="#e4e4e8" strokeWidth="2">
          <circle cx="8.500" cy="8.500" r="7.300" fill="#5a5a5a" />
          <path d="M13.700 13.700 18.800 18.800" strokeWidth="2.400" />
        </svg>
        <div className="ml-[11px] mt-px w-[170px] text-[16.500px] leading-6 tracking-[-0.200px] text-[#d0d0d0]">Search</div>
        <FestivalArt />
      </div>
      <div className="ml-[2.500px] mt-[4px] flex">
        <TaskItem><TaskViewIcon /></TaskItem>
        <TaskItem><FolderIcon /></TaskItem>
        <TaskItem><CopilotIcon /></TaskItem>
        <TaskItem><EdgeIcon /></TaskItem>
        <TaskItem><StoreIcon /></TaskItem>
        <TaskItem><McAfeeIcon /></TaskItem>
        <TaskItem><HelpIcon /></TaskItem>
        <TaskItem>
          <div className="relative flex h-[50px] w-[50px] items-center justify-center rounded-[5px] border border-[#373737] bg-[#2d2d2d]">
            <ChromeIcon />
            <div className="absolute bottom-0 left-[14px] h-1 w-5 rounded-full bg-[#c8bdf0]" />
          </div>
        </TaskItem>
        <TaskItem>
          <div className="relative">
            <VSCodeIcon />
            <div className="absolute -bottom-[9px] left-[11px] h-1 w-2 rounded-full bg-[#9a9a9a]" />
          </div>
        </TaskItem>
        <TaskItem>
          <div className="relative">
            <FaWhatsapp className="-m-[2px] h-[34px] w-[34px] text-[#25d366]" />
            <div className="absolute -right-[9px] -top-[6px] h-5 w-[26px] rounded-full bg-[#c8bdf0] text-center text-[14px] leading-5 text-black">32</div>
            <div className="absolute -bottom-[9px] left-[11px] h-1 w-2 rounded-full bg-[#9a9a9a]" />
          </div>
        </TaskItem>
      </div>
      <ChevronUp className="ml-[179px] mt-[19px] h-[20px] w-[20px]" strokeWidth={2.200} />
      <svg className="ml-[20px] mt-[22px]" width="20" height="14" viewBox="0 0 20 14">
        <path d="M4.500 13.500A4.300 4.300 0 0 1 3.500 5 6 6 0 0 1 14 3.500a5 5 0 0 1 1.500 10Z" fill="#d6d6d6" />
        <path d="M4.500 13.500C6 9 9 5 14.500 4.500" stroke="#8a8a8a" strokeWidth="1.300" fill="none" />
      </svg>
      <div className="ml-[23px] mt-[10px] w-[31px] text-center text-[14.400px] leading-5 tracking-[-0.100px]">
        <div>ENG</div>
        <div>IN</div>
      </div>
      <svg className="ml-[21px] mt-[21px]" width="20" height="16" viewBox="0 0 20 16" fill="none" stroke="#fff" strokeWidth="1.600">
        <path d="M.8 6a13 13 0 0 1 18.400 0M3.600 8.900a9 9 0 0 1 12.800 0M6.400 11.700a5 5 0 0 1 7.200 0" />
        <circle cx="10" cy="14" r="1.500" fill="#fff" stroke="none" />
      </svg>
      <svg className="ml-[10px] mt-[20px]" width="20" height="18" viewBox="0 0 20 18" fill="none" stroke="#fff" strokeWidth="1.400">
        <path d="M.8 6.200h3L8.300 2v14L3.800 11.800h-3ZM10.800 6a4.500 4.500 0 0 1 0 6M13 3.600a8 8 0 0 1 0 10.800" />
        <path d="M15.600 1.400a11 11 0 0 1 0 15.200" stroke="#666" />
      </svg>
      <svg className="ml-[10px] mt-[22px]" width="20" height="14" viewBox="0 0 20 14" fill="none" stroke="#fff" strokeWidth="1.500">
        <rect x="0.800" y="0.800" width="15.800" height="12.400" rx="3" />
        <rect x="2.600" y="3" width="4" height="8" rx="1" fill="#fff" stroke="none" />
        <path d="M18.500 4.800v4.400" strokeWidth="2" />
      </svg>
      <div className="ml-[13px] mt-[9px] w-[85px] text-right text-[14.400px] leading-5">
        <div className="tracking-[-0.150px]">16:45</div>
        <div className="tracking-[0.220px]">22-10-2025</div>
      </div>
    </div>
  );
}

export default function App() {
  return (
    <div className="flex h-[1080px] w-[1920px] flex-col overflow-hidden bg-white font-['Open_Sans','Noto_Sans',sans-serif]">
      <TabStrip />
      <Toolbar />
      <div className="relative flex h-[911px] overflow-hidden">
        <div className="w-[1901px] overflow-hidden bg-white">
          <Navbar />
          <ContactSection />
          <Footer />
        </div>
        <Scrollbar />
        <div className="absolute bottom-0 left-0 h-[27px] w-[173px] rounded-tr-[5px] bg-[#1f2120] pl-[6px] text-[14px] leading-[27px] text-[#c7c7c7]">127.0.0.1:5500/#contact</div>
      </div>
      <Taskbar />
    </div>
  );
}
